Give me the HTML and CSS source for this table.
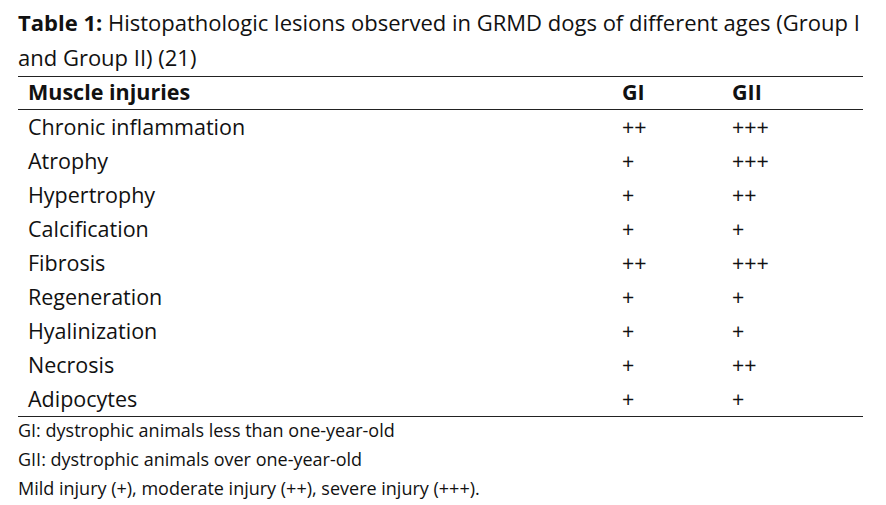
FILE: index.html
```html
<!DOCTYPE html>
<html lang="en">
<head>
<meta charset="utf-8">
<title>Table 1</title>
<link rel="stylesheet" href="styles.css">
</head>
<body>
<div class="wrap">
  <p class="caption"><span class="label">Table 1:</span> Histopathologic lesions observed in GRMD dogs of different ages (Group I and Group II) (21)</p>
  <table class="data">
    <colgroup>
      <col class="c1"><col class="c2"><col class="c3">
    </colgroup>
    <thead>
      <tr><th>Muscle injuries</th><th>GI</th><th>GII</th></tr>
    </thead>
    <tbody>
      <tr><td>Chronic inflammation</td><td class="v">++</td><td class="v">+++</td></tr>
      <tr><td>Atrophy</td><td class="v">+</td><td class="v">+++</td></tr>
      <tr><td>Hypertrophy</td><td class="v">+</td><td class="v">++</td></tr>
      <tr><td>Calcification</td><td class="v">+</td><td class="v">+</td></tr>
      <tr><td>Fibrosis</td><td class="v">++</td><td class="v">+++</td></tr>
      <tr><td>Regeneration</td><td class="v">+</td><td class="v">+</td></tr>
      <tr><td>Hyalinization</td><td class="v">+</td><td class="v">+</td></tr>
      <tr><td>Necrosis</td><td class="v">+</td><td class="v">++</td></tr>
      <tr><td>Adipocytes</td><td class="v">+</td><td class="v">+</td></tr>
    </tbody>
  </table>
  <div class="notes">
    <p>GI: dystrophic animals less than one-year-old</p>
    <p>GII: dystrophic animals over one-year-old</p>
    <p>Mild injury (+), moderate injury (++), severe injury (+++).</p>
  </div>
</div>
</body>
</html>
```

FILE: styles.css
```css
html, body {
  margin: 0;
  padding: 0;
  background: #fff;
}
body {
  font-family: "Open Sans", "Liberation Sans", sans-serif;
  color: #111;
}
.wrap {
  width: 845px;
  padding: 5px 0 0 18px;
}
.caption {
  margin: 0 0 1px;
  font-size: 22px;
  line-height: 35px;
}
.caption .label {
  font-weight: 700;
}
.data {
  width: 845px;
  border-collapse: separate;
  border-spacing: 0;
  table-layout: fixed;
  border-top: 1px solid #222;
  border-bottom: 1px solid #222;
}
.c1 { width: 594px; }
.c2 { width: 110px; }
.c3 { width: 141px; }
.data th {
  text-align: left;
  font-weight: 700;
  font-size: 21.5px;
  line-height: 29px;
  height: 29px;
  padding: 0 0 3px 10px;
  vertical-align: top;
  border-bottom: 1px solid #222;
}
.data td {
  font-size: 21.5px;
  line-height: 34px;
  padding: 0 0 0 10px;
}
.notes {
  margin-top: -1px;
}
.notes p {
  margin: 0;
  font-size: 18px;
  line-height: 29px;
}
```
